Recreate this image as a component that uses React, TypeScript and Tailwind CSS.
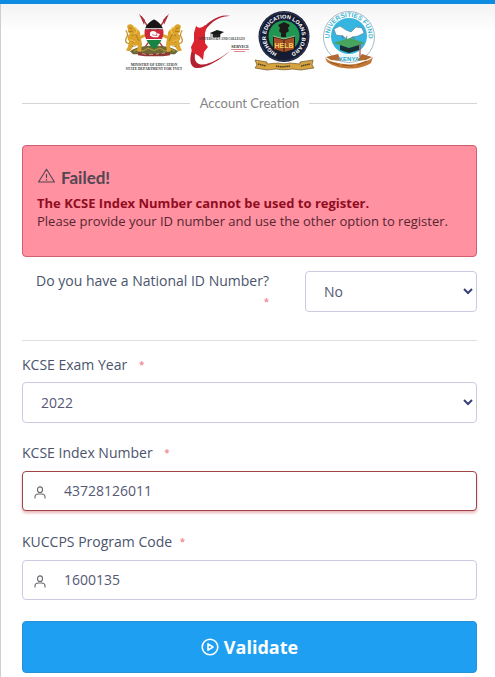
import type { ReactNode } from "react";
import { useState } from "react";

function CoatOfArms() {
  const lion = (
    <g>
      <path d="M131 25c-3-3-5-1-6 1l1 4c-1 2 0 4 2 5-3 4-3 7-1 10l-1 7-2 5 4 1 4-8 4 1-1 7 4 1 1-10-1-7 5-3-1-3-5 2c1-4-1-8-6-10z" fill="#dba32c" />
      <path d="M127 28l3 1m-3 4l4-1m-1 6l4-2m-5 8l3 3m2-10l3 8m-7 7l4-1" stroke="#8a5f18" strokeWidth=".7" fill="none" />
      <path d="M127 48c-4 0-4-5-2-9s-1-5-1-8" stroke="#c18d24" strokeWidth="1.2" fill="none" />
      <path d="M131 26l3 2 1 5-3 4M128 43l5 3" stroke="#f3c64c" strokeWidth="1.1" fill="none" />
    </g>
  );
  return (
    <svg viewBox="120 10 63 62" className="h-[62px] w-[63px]" role="img" aria-label="Ministry of Education">
      <g transform="translate(0 6) scale(1 .78)">
        <path d="M139 13l6 12 18 31M165 13l-6 12-18 31" stroke="#b8343a" strokeWidth="1.5" fill="none" />
        <path d="M137 10l6 8-1 6zM167 10l-6 8 1 6z" fill="#a8323a" />
        <path d="M128 58c6-5 12-7 24-7s18 2 24 7l-3 4h-42z" fill="#6d6838" />
        <path d="M132 58l5-3 4 3 5-4 6 3 6-3 5 4 5-3 5 3" fill="none" stroke="#b59638" strokeWidth="1.2" />
        {lion}
        <g transform="translate(304 0) scale(-1 1)">{lion}</g>
        <clipPath id="shield"><path d="M152 17c10 7 15 20 0 39-15-19-10-32 0-39z" /></clipPath>
        <g clipPath="url(#shield)">
          <path d="M138 16h28v14h-28z" fill="#161616" />
          <path d="M138 30h28v13h-28z" fill="#cf2638" />
          <path d="M138 43h28v14h-28z" fill="#188444" />
          <path d="M138 29h28M138 43h28" stroke="#fff" strokeWidth="1.2" />
        </g>
        <path d="M148 34c3-3 5-2 7 1l3 1-2 4h-5l-3-2z" fill="#fff" />
        <path d="M150 37l5 1-1-3" stroke="#cf2638" fill="none" strokeWidth=".7" />
        <path d="M136 59c8 3 24 3 32 0v4c-8 2-24 2-32 0z" fill="#8e3634" />
        <path d="M140 61l4 1m3 0h4m3 0l3-1m3 0l3-1" stroke="#ead3ae" strokeWidth=".7" />
      </g>
      <text x="152" y="66" textAnchor="middle" fontSize="3.6" fontWeight="700" fill="#333" className="font-['Liberation_Serif',serif]">MINISTRY OF EDUCATION</text>
      <text x="152" y="70" textAnchor="middle" fontSize="3.6" fontWeight="700" fill="#333" className="font-['Liberation_Serif',serif]">STATE DEPARTMENT FOR TVET</text>
    </svg>
  );
}

function PlacementLogo() {
  return (
    <svg viewBox="183 10 66 62" className="h-[62px] w-[66px]" role="img" aria-label="Placement service">
      <path d="M229 16c-12-3-25 6-32 18-8 14-13 32-3 34 9 1 24-8 34-17-9 7-24 16-31 13-8-3-3-18 3-29 6-11 17-20 29-19z" fill="#b3202f" />
      <path d="M194 26c3 3 6 2 9-1l2 1-2 7v10l3 4-4 5-1 8-4-4-7-4-1-5 3-6v-8z" fill="#da2430" />
      <path d="M208 33l7-3 7 2-7 4z" fill="#181818" />
      <path d="M211 34v3h7v-3M209 33v4" fill="#222" stroke="#222" strokeWidth=".6" />
      <text x="197" y="40" fontSize="3" fontWeight="700" fill="#333" className="font-['Liberation_Serif',serif]">UNIVERSITIES AND COLLEGES</text>
      <text x="247" y="48" textAnchor="end" fontSize="4" fontWeight="700" fill="#222" className="font-['Liberation_Serif',serif]">SERVICE</text>
      <path d="M229 49.5h18M232 51.5h11" stroke="#c75660" strokeWidth=".7" />
    </svg>
  );
}

function HelbLogo() {
  return (
    <svg viewBox="249 10 67 62" className="h-[62px] w-[67px]" role="img" aria-label="Higher Education Loans Board">
      <circle cx="282" cy="36.5" r="25.5" fill="#141b33" />
      <circle cx="282" cy="36.5" r="24.3" fill="none" stroke="#54617a" strokeWidth=".5" />
      <circle cx="282" cy="36" r="15.5" fill="#1f9652" />
      <path id="helbRing" d="M278 54.1A18 18 0 1 1 286 54.1" fill="none" />
      <text fontSize="5.5" fontWeight="700" fill="#fff" className="font-['Liberation_Sans',sans-serif]">
        <textPath href="#helbRing" startOffset="50%" textAnchor="middle">HIGHER EDUCATION LOANS BOARD</textPath>
      </text>
      <path d="M276 25l6-3 6 3-2 3 1 3-3 2v4h-5v-4l-2-2 1-3z" fill="#1d1b18" />
      <path d="M271 36l11 3 11-3v13l-11 4-11-4z" fill="#201a18" />
      <path d="M272 37.500l9.500 2.500v12l-9.500-3zM282.500 40l9.500-2.500v11.500l-9.500 3z" fill="#a64e25" />
      <path d="M271 36l11 3 11-3" fill="none" stroke="#eee2bb" strokeWidth=".7" />
      <text x="282" y="48" textAnchor="middle" fontSize="7" fontWeight="700" fill="#f4cf62" className="font-['Liberation_Sans',sans-serif]">HELB</text>
      <path d="M253 60l12 2v2l11-1c4 1 8 1 12 0l10 1v-2l13-2-1 5 2 3-13 2-9-1c-5 1-11 1-16 0l-9 1-12-2 2-3z" fill="#d6a33e" stroke="#6f562d" strokeWidth=".7" />
      <path d="M256 64l8 2m10 0c4 1 9 1 14 0m11 0l9-2" stroke="#483e2b" strokeWidth="1.5" strokeDasharray="1.5 .6" fill="none" />
    </svg>
  );
}

function FundLogo() {
  return (
    <svg viewBox="316 10 59 62" className="h-[62px] w-[59px]" role="img" aria-label="Universities Fund Kenya">
      <circle cx="347" cy="37" r="25.5" fill="#fff" stroke="#9bb3bf" strokeWidth=".9" />
      <circle cx="347" cy="36" r="18" fill="#35b5df" />
      <path id="fundRing" d="M334 51A19.500 19.500 0 1 1 360 51" fill="none" />
      <text fontSize="6.5" fontWeight="700" fill="#42b4d2" className="font-['Liberation_Sans',sans-serif]">
        <textPath href="#fundRing" startOffset="50%" textAnchor="middle">UNIVERSITIES FUND</textPath>
      </text>
      <path d="M332 29l6-3 6 4 5 2 5-5 6 1 2 5-6 3-6 1-4 3-5-4-7-1z" fill="#fff" stroke="#5c7b8a" strokeWidth=".6" />
      <path d="M340 35l1 4m4-3l-1 4m6-3l3 2" stroke="#55717f" strokeWidth=".8" />
      <path d="M331 43l17-5 15 5-15 5z" fill="#48a45d" />
      <path d="M338 45l9 3 10-3v5l-10 3-9-3z" fill="#172f32" />
      <path d="M335 53l12 2 13-2-2 8h-21z" fill="#e9f7fa" />
      <path d="M358 44v13" stroke="#bd4a42" strokeWidth="1.2" />
      <path d="M323 57c3 4 8 5 13 6 8 2 17 2 25-1 4-1 7-2 10-5l-2 6c-10 7-31 8-44-1z" fill="#c47735" />
      <path d="M328 62l9 3m3 0l11 1m4-1l10-4" stroke="#845020" strokeWidth=".8" />
      <path d="M324 57l12-3 3 7-10-1zM370 57l-10-3-5 7 9-1z" fill="#b36a30" />
      <text x="347" y="61" textAnchor="middle" fontSize="6" fontWeight="700" fill="#2da5c8" className="font-['Liberation_Sans',sans-serif]">KENYA</text>
    </svg>
  );
}

function UserIcon() {
  return (
    <svg viewBox="0 0 12 13" className="h-[13px] w-3" fill="none" stroke="#68686d" strokeWidth="1.1" aria-hidden="true">
      <ellipse cx="6" cy="3.7" rx="2.5" ry="2.8" />
      <path d="M1 12.5V11c0-2 1.7-3 3.5-3h3c1.8 0 3.5 1 3.5 3v1.5" />
    </svg>
  );
}

function Star({ className = "" }: { className?: string }) {
  return <span className={`text-[9px] leading-[14px] font-bold text-[#f38a96] ${className}`}>*</span>;
}

function Select({ id, value, options, className = "" }: { id: string; value: string; options: string[]; className?: string }) {
  return (
    <div className="relative">
      <select id={id} defaultValue={value} className={`h-[41px] w-full appearance-none rounded border border-[#cacbe0] bg-white pr-8 text-sm text-[#555974] outline-none ${className}`}>
        {options.map((o) => <option key={o}>{o}</option>)}
      </select>
      <svg viewBox="0 0 10 7" className="pointer-events-none absolute top-[17px] right-1 h-[7px] w-[10px]" fill="none" stroke="#3c4079" strokeWidth="2" aria-hidden="true">
        <path d="M1 1l4 4 4-4" />
      </svg>
    </div>
  );
}

function TextField({ id, label, initial, invalid = false }: { id: string; label: ReactNode; initial: string; invalid?: boolean }) {
  const [value, setValue] = useState(initial);
  const look = invalid ? "border-[#a04445] shadow-[0_2px_3px_#e9b5b9]" : "border-[#cacbe0]";
  return (
    <div>
      <label htmlFor={id} className="flex h-5 items-center">{label}</label>
      <div className={`mt-2 flex h-10 items-center rounded border bg-white pl-[11px] ${look}`}>
        <span className="mt-[2px]"><UserIcon /></span>
        <input id={id} value={value} aria-invalid={invalid} onChange={(e) => setValue(e.target.value)} className="ml-[18px] min-w-0 flex-1 bg-transparent text-sm text-[#555974] outline-none" />
      </div>
    </div>
  );
}

export default function App() {
  return (
    <main className="min-h-screen border-t-4 border-[#0d8ce2] bg-white font-['Open_Sans','Noto_Sans',sans-serif] text-sm text-[#4b546c]">
      <div className="min-h-[673px] border-l border-[#cfcfd1] bg-[linear-gradient(to_bottom,#f3f3f3,#ffffff_28px)] pr-[18px] pb-1 pl-[21px]">
        <header className="flex justify-center pt-[6px]">
          <CoatOfArms />
          <PlacementLogo />
          <HelbLogo />
          <FundLogo />
        </header>

        <div className="mt-[21px] flex items-center gap-[10px] before:h-px before:flex-1 before:bg-[#d4d4d4] after:h-px after:flex-1 after:bg-[#d4d4d4]">
          <h1 className="font-['Lato',sans-serif] text-[13px] leading-5 text-[#858585]">Account Creation</h1>
        </div>

        <form onSubmit={(e) => e.preventDefault()}>
          <section role="alert" className="mt-8 h-28 rounded border border-[#d05f70] bg-[#ff91a0] px-[14px] pt-[22px] text-[13px] leading-[18px]">
            <h2 className="flex items-start gap-[5px] font-['Lato',sans-serif] text-[17px] leading-5 font-bold text-[#534653]">
              <svg viewBox="0 0 19 16" className="h-4 w-[19px]" fill="none" stroke="currentColor" strokeWidth="1.1" aria-hidden="true">
                <path d="M9.5 1.2L17.5 14h-16zM9.5 6v4M9.5 11v1.4" strokeLinejoin="round" />
              </svg>
              Failed!
            </h2>
            <p className="mt-[6px] font-bold text-[#900c20]">The KCSE Index Number cannot be used to register.</p>
            <p className="text-[#552631]">Please provide your ID number and use the other option to register.</p>
          </section>

          <div className="mt-[14px] flex justify-between border-b border-[#dfdfe3] pb-7">
            <label htmlFor="national-id" className="flex flex-col pl-[14px] leading-5">
              Do you have a National ID Number?
              <Star className="mt-1 self-end" />
            </label>
            <div className="w-43">
              <Select id="national-id" value="No" options={["No", "Yes"]} className="pl-[18px]" />
            </div>
          </div>

          <div className="mt-[14px]">
            <label htmlFor="exam-year" className="flex h-5 items-center">KCSE Exam Year <Star className="ml-3" /></label>
            <div className="mt-[7px]">
              <Select id="exam-year" value="2022" options={["2022", "2021", "2020"]} className="pl-[18px]" />
            </div>
          </div>

          <div className="mt-5 flex flex-col gap-[21px]">
            <TextField id="index-number" label={<>KCSE Index Number <Star className="ml-3" /></>} initial="43728126011" invalid />
            <TextField id="program-code" label={<>KUCCPS Program Code <Star className="ml-2" /></>} initial="1600135" />
          </div>

          <button type="submit" className="mt-[21px] flex h-[52px] w-full items-center justify-center gap-[5px] rounded border border-[#2990da] bg-[#1f9ff2] text-lg font-bold text-white">
            <svg viewBox="0 0 18 18" className="h-[18px] w-[18px]" fill="none" stroke="currentColor" strokeWidth="1.6" aria-hidden="true">
              <circle cx="9" cy="9" r="7.8" />
              <path d="M7 5.8v6.4l5-3.2z" strokeLinejoin="round" />
            </svg>
            Validate
          </button>
        </form>
      </div>
    </main>
  );
}
